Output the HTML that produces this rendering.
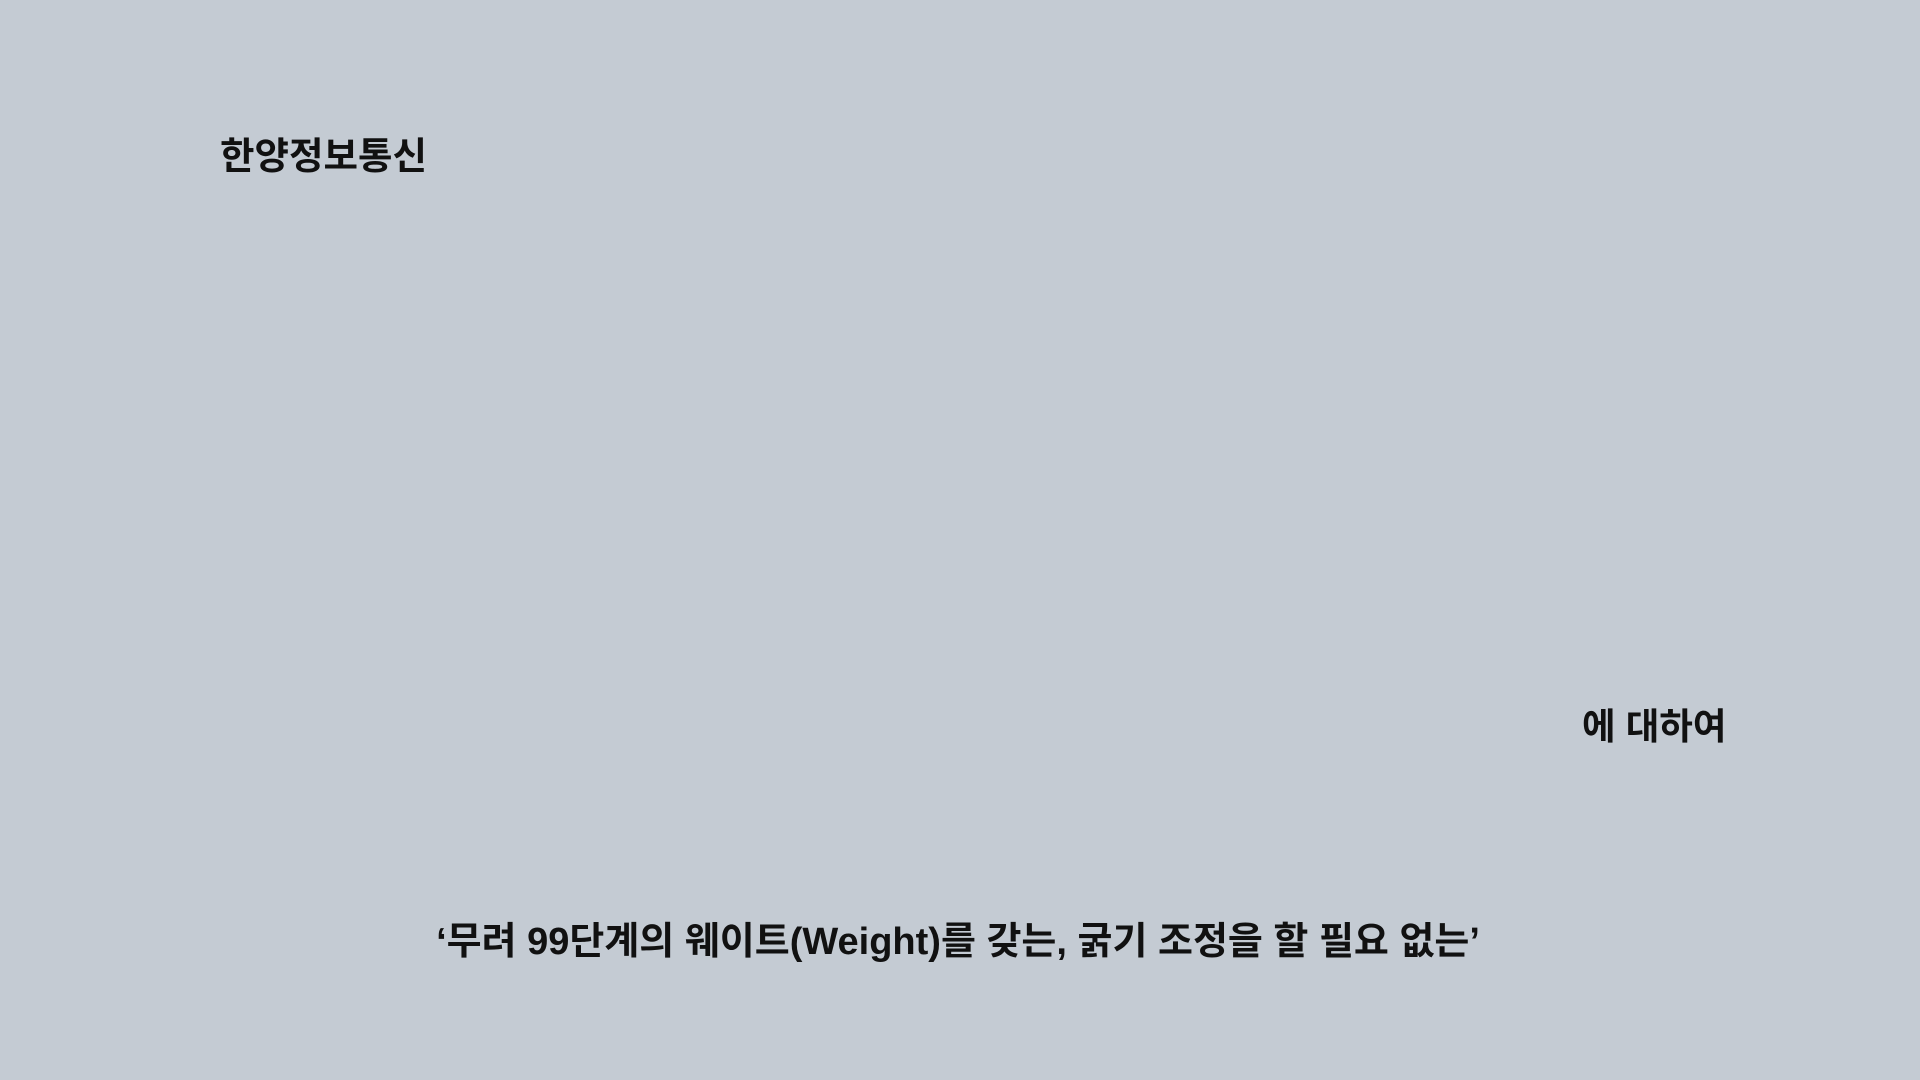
<!DOCTYPE html>
<html><head><meta charset="utf-8"><style>
html,body{margin:0;padding:0;}
body{width:1920px;height:1080px;background:#c4cbd3;position:relative;overflow:hidden;font-family:"Liberation Sans","Noto Sans CJK KR",sans-serif;font-weight:700;color:#111;}
.t{position:absolute;white-space:nowrap;line-height:1;}
</style></head><body>
<div class="t" style="left:220px;top:138px;font-size:37.5px;">한양정보통신</div>
<div class="t" style="left:1582px;top:709px;font-size:36.5px;">에 대하여</div>
<div class="t" style="left:-2px;width:1920px;text-align:center;top:923px;font-size:38px;">‘무려 99단계의 웨이트(Weight)를 갖는, 굵기 조정을 할 필요 없는’</div>
</body></html>
